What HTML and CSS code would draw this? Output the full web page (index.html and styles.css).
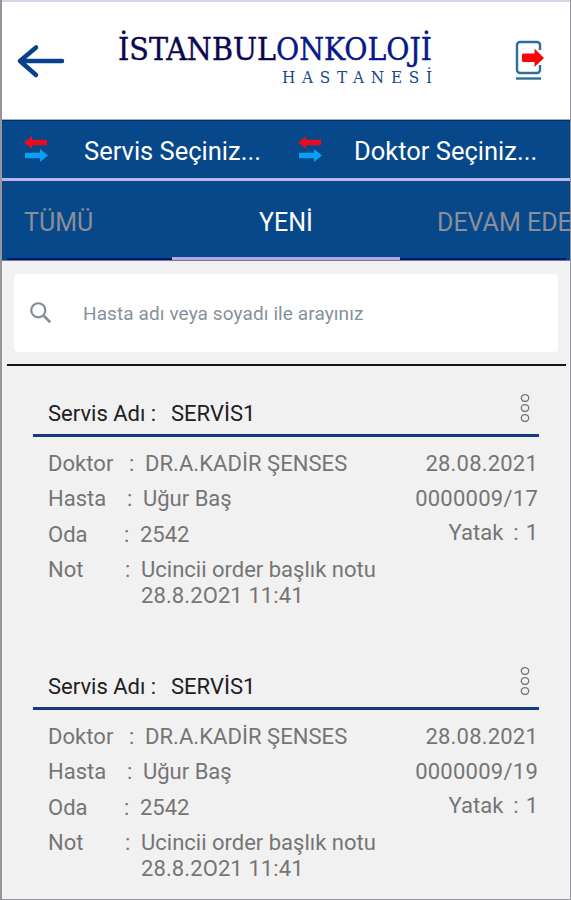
FILE: index.html
```html
<!DOCTYPE html>
<html lang="tr">
<head>
<meta charset="utf-8">
<title>İstanbul Onkoloji Hastanesi</title>
<link rel="stylesheet" href="styles.css">
</head>
<body>
<svg width="0" height="0" class="defs" aria-hidden="true">
  <symbol id="swap" viewBox="0 0 24 28">
    <path fill="#e80c20" d="M0 7.500 8 1v3.700h15v5.600H8v3.500z"/>
    <path fill="#08a0f4" d="M24 20.500 16 14v3.700H1v5.600h15v3.700z"/>
  </symbol>
  <symbol id="more" viewBox="0 0 10 30">
    <g fill="none" stroke="#777" stroke-width="1.300"><ellipse cx="5" cy="5" rx="3.700" ry="3.400"/><ellipse cx="5" cy="15" rx="3.700" ry="3.400"/><ellipse cx="5" cy="25" rx="3.700" ry="3.400"/></g>
  </symbol>
</svg>
<div class="app">
  <header class="header">
    <svg class="back" viewBox="0 0 50 36"><path d="M46 18H4M20 4.500 4 18l16 14" fill="none" stroke="#07408c" stroke-width="4.500" stroke-linecap="round" stroke-linejoin="round"/></svg>
    <svg class="logo" viewBox="0 0 320 72">
      <text class="logo-name logo-dark" x="1" y="41" textLength="158" lengthAdjust="spacingAndGlyphs">İSTANBUL</text>
      <text class="logo-name" x="159" y="41" textLength="156" lengthAdjust="spacingAndGlyphs">ONKOLOJİ</text>
      <text class="logo-sub" x="165" y="64" textLength="150">HASTANESİ</text>
    </svg>
    <svg class="exit" viewBox="0 0 32 42">
      <path d="M26 11V6a3 3 0 0 0-3-3H6a3 3 0 0 0-3 3v25a3 3 0 0 0 3 3h17a3 3 0 0 0 3-3v-5" fill="none" stroke="#2b6f9c" stroke-width="2.400"/>
      <path d="M2 39.500h25" stroke="#2b6f9c" stroke-width="2.400"/>
      <path d="M9.500 14.500h11V9.500L30 19 20.500 28v-5h-11q-1.500 0-1.500-1.500V16q0-1.500 1.500-1.500z" fill="#fb0207"/>
    </svg>
  </header>
  <div class="filters">
    <div class="filter"><svg class="swap"><use href="#swap"/></svg><span>Servis Seçiniz...</span></div>
    <div class="filter second"><svg class="swap"><use href="#swap"/></svg><span>Doktor Seçiniz...</span></div>
  </div>
  <nav class="tabs">
    <div class="tab all">TÜMÜ</div>
    <div class="tab active">YENİ</div>
    <div class="tab going">DEVAM EDE</div>
  </nav>
  <div class="search">
    <svg class="glass" viewBox="0 0 24 24"><circle cx="9.500" cy="9.500" r="6.500" fill="none" stroke="#858b90" stroke-width="2"/><path d="m14.500 14.500 6 6" stroke="#858b90" stroke-width="2.400"/></svg>
    <span>Hasta adı veya soyadı ile arayınız</span>
  </div>
  <main class="list">
    <section class="card">
      <div class="title"><span class="name">Servis Adı :</span><span class="value">SERVİS1</span><svg class="more"><use href="#more"/></svg></div>
      <div class="details">
        <div class="left">
          <div class="row doctor"><span class="label">Doktor</span><span class="colon">:</span><span>DR.A.KADİR ŞENSES</span></div>
          <div class="row patient"><span class="label">Hasta</span><span class="colon">:</span><span>Uğur Baş</span></div>
          <div class="row room"><span class="label">Oda</span><span class="colon">:</span><span>2542</span></div>
          <div class="row note"><span class="label">Not</span><span class="colon">:</span><span>Ucincii order başlık notu<br><span class="stamp">28.8.2O21 11:41</span></span></div>
        </div>
        <div class="right"><div class="date">28.08.2021</div><div class="number">0000009/17</div><div class="bed"><span>Yatak</span><span>:</span><span>1</span></div></div>
      </div>
    </section>
    <section class="card">
      <div class="title"><span class="name">Servis Adı :</span><span class="value">SERVİS1</span><svg class="more"><use href="#more"/></svg></div>
      <div class="details">
        <div class="left">
          <div class="row doctor"><span class="label">Doktor</span><span class="colon">:</span><span>DR.A.KADİR ŞENSES</span></div>
          <div class="row patient"><span class="label">Hasta</span><span class="colon">:</span><span>Uğur Baş</span></div>
          <div class="row room"><span class="label">Oda</span><span class="colon">:</span><span>2542</span></div>
          <div class="row note"><span class="label">Not</span><span class="colon">:</span><span>Ucincii order başlık notu<br><span class="stamp">28.8.2O21 11:41</span></span></div>
        </div>
        <div class="right"><div class="date">28.08.2021</div><div class="number">0000009/19</div><div class="bed"><span>Yatak</span><span>:</span><span>1</span></div></div>
      </div>
    </section>
  </main>
</div>
</body>
</html>
```
FILE: styles.css
```css
* { box-sizing: border-box; }
body { margin: 0; font-family: Roboto, sans-serif; }
svg { display: block; flex: none; }
.defs { position: absolute; }
.app {
  width: 571px;
  height: 900px;
  overflow: hidden;
  background: #f1f1f1;
  border: solid #96959b;
  border-width: 0 1px 1px 2px;
  white-space: nowrap;
}
.header {
  height: 120px;
  background: #fff;
  border-top: 2px solid #d6d5e6;
  border-bottom: 1px solid #a9aabf;
  display: flex;
  align-items: flex-start;
}
.back { width: 50px; height: 36px; margin: 41px 0 0 14px; }
.logo { width: 320px; height: 72px; margin: 17px 0 0 51px; }
.logo-name { font: 32px "DejaVu Serif Condensed", "DejaVu Serif", serif; fill: #08188a; stroke: #08188a; stroke-width: .4px; }
.logo-dark { fill: #0b0650; stroke: #0b0650; }
.logo-sub { font: 17px "DejaVu Serif Condensed", "DejaVu Serif", serif; fill: #174a8d; }
.exit { width: 32px; height: 42px; margin: 37px 0 0 77px; }
.filters {
  height: 61px;
  background: #07488a;
  border-top: 1px solid #062a77;
  border-bottom: 3px solid #bbb4ee;
  display: flex;
  color: #fff;
  font-size: 25.5px;
}
.filter { width: 273px; padding: 0 0 2px 22px; display: flex; align-items: center; }
.filter span { padding-top: 4px; }
.swap { width: 24px; height: 28px; margin-right: 36px; }
.second { padding-left: 23px; }
.second .swap { margin-right: 32px; }
.tabs {
  height: 80px;
  background: #07488a;
  display: flex;
  font-size: 25px;
  line-height: 83px;
  border-bottom: 1px solid #77749c;
}
.tab { color: #8a8f99; height: 79px; border-bottom: 2px solid #061a6c; }
.all { width: 165px; margin-left: 5px; padding-left: 17px; }
.active { width: 228px; text-align: center; color: #fff; border-bottom: 3px solid #b3a5de; }
.going { width: 166px; padding-left: 37px; }
.search {
  height: 78px;
  margin: 13px 12px 0 12px;
  padding-left: 14px;
  background: #fff;
  border-radius: 4px;
  display: flex;
  align-items: center;
  color: #85919a;
  font-size: 19px;
  letter-spacing: .1px;
}
.glass { width: 26px; height: 26px; margin-right: 29px; }
.list { margin: 12px 4px 0 5px; border-top: 2px solid #151515; }
.card { height: 273px; padding: 21px 27px 0 26px; }
.title { height: 50px; padding: 14px 0 0 15px; display: flex; border-bottom: 3px solid #153885; color: #202020; font-size: 22px; line-height: 26px; }
.name { width: 123px; }
.value { flex: 1; }
.more { width: 10px; height: 30px; margin: -8px 9px 0 0; }
.details { display: flex; justify-content: space-between; padding: 14px 1px 0 15px; color: #757575; font-size: 22px; line-height: 26px; }
.row { display: flex; min-height: 35.4px; }
.doctor { letter-spacing: .05px; }
.label { width: 81px; }
.colon { width: 16px; }
.patient .label { width: 79px; }
.room .label { width: 76px; }
.note .label { width: 77px; }
.stamp { letter-spacing: .1px; }
.right { text-align: right; }
.date, .number { height: 35.4px; letter-spacing: .2px; }
.number { letter-spacing: .25px; }
.bed { display: flex; justify-content: flex-end; gap: 10px; margin-top: -2px; }
.bed span:last-child { margin-left: -3px; }
```
